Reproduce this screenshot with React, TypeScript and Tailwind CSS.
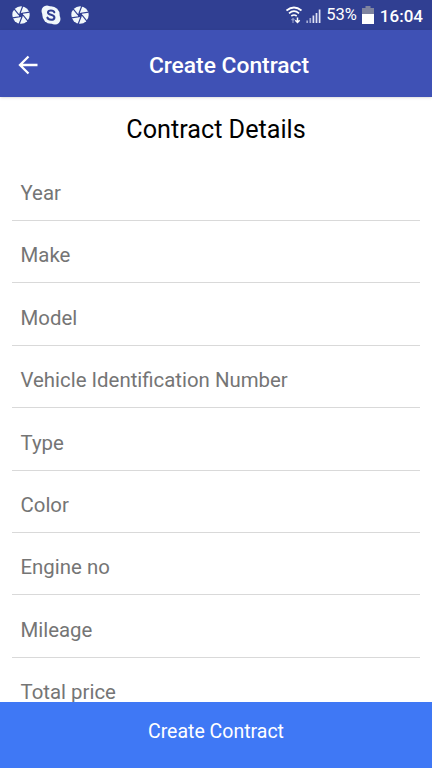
const fields = ['Year', 'Make', 'Model', 'Vehicle Identification Number', 'Type', 'Color', 'Engine no', 'Mileage', 'Total price'];
const blades = [0, 60, 120, 180, 240, 300];

function ShutterIcon() {
  return (
    <svg className="h-[18px] w-[18px]" viewBox="0 0 18 18">
      <circle cx="9" cy="9" r="8.700" fill="#f1f8fb" />
      {blades.map(angle => (
        <path key={angle} d="M10.500 8.300 8.200 6.800 10.800 0" transform={`rotate(${angle} 9 9)`} fill="none" stroke="#303f92" strokeWidth="1.200" />
      ))}
      <circle cx="9" cy="9" r="1.600" fill="#303f92" />
    </svg>
  );
}

function SkypeIcon() {
  return (
    <svg className="h-5 w-5" viewBox="0 0 20 20">
      <circle cx="6" cy="6" r="5.500" fill="#f1f8fb" />
      <circle cx="14" cy="14" r="5.500" fill="#f1f8fb" />
      <circle cx="10" cy="10" r="8.700" fill="#f1f8fb" />
      <path d="M13.300 7.300C12.600 5 7 4.700 7 7.500c0 3 6.400 1.700 6.400 4.900 0 3.100-6.100 3-7 .3" fill="none" stroke="#303f92" strokeWidth="2.100" strokeLinecap="round" />
    </svg>
  );
}

function StatusBar() {
  return (
    <div className="flex h-[30px] shrink-0 items-center justify-between bg-[#303f92] pl-3 pr-[9px] text-white">
      <div className="flex items-center gap-[10.500px]">
        <ShutterIcon />
        <SkypeIcon />
        <ShutterIcon />
      </div>
      <div className="flex items-center">
        <svg className="h-5 w-[38px]" viewBox="0 0 38 20" fill="none" stroke="#fff">
          <path d="M.5 5.500Q8-.5 15.500 5.500M3 8.300Q8 4 13 8.300M5.300 11Q8 9 10.700 11" strokeWidth="1.700" />
          <path d="M7 18v-4.500M5.500 15 7 13.500l1.500 1.500" stroke="#8d96c9" strokeWidth="1.200" />
          <path d="M11.500 12.500v5M9.300 15.300l2.200 2.200 2.200-2.200" strokeWidth="1.500" />
          <path d="M21.200 18v-2.500M24.300 18v-5" stroke="#a5add6" strokeWidth="1.700" />
          <path d="M27.400 18v-7.500M30.500 18V8M33.600 18V4.500" stroke="#dfe3f5" strokeWidth="1.700" />
        </svg>
        <span className="ml-[2px] text-[16.500px] leading-5">53%</span>
        <svg className="ml-[5px] h-[18px] w-3" viewBox="0 0 12 18">
          <path d="M3.500 0h5v2H12v16H0V2h3.500z" fill="#7f849f" />
          <path d="M0 8h12v10H0z" fill="#fff" />
        </svg>
        <span className="ml-[6px] pt-px text-[17px] font-medium leading-5">16:04</span>
      </div>
    </div>
  );
}

export default function App() {
  return (
    <div className="flex h-screen w-full flex-col overflow-hidden bg-white font-[Roboto,sans-serif]">
      <StatusBar />
      <header className="z-10 grid h-[67px] shrink-0 grid-cols-[58px_1fr_32px] items-center bg-[#3f51b5] pt-[3px] text-white shadow">
        <button type="button" aria-label="Back" className="pl-[18px]">
          <svg className="h-5 w-5" viewBox="0 0 20 20" fill="none" stroke="#fff" strokeWidth="2.300">
            <path d="M19.500 10H2M10.500 1.500 2 10l8.500 8.500" />
          </svg>
        </button>
        <h1 className="pt-px text-center text-[22.800px] font-medium leading-7">Create Contract</h1>
      </header>
      <main className="min-h-0 flex-1 overflow-hidden px-3">
        <h2 className="pt-[17px] text-center text-[25.200px] leading-8 text-black">Contract Details</h2>
        <form className="mt-[12.600px]">
          {fields.map(field => (
            <div key={field} className="flex h-[62.400px] items-end border-b border-[#d9d9d9] pb-[13px] pl-[8.500px]">
              <label className="text-[20.400px] leading-7 text-[#757575]">{field}</label>
            </div>
          ))}
        </form>
      </main>
      <button type="button" className="h-[66px] shrink-0 bg-[#3f78f5] pb-[6px] text-[19.500px] text-white">
        Create Contract
      </button>
    </div>
  );
}
